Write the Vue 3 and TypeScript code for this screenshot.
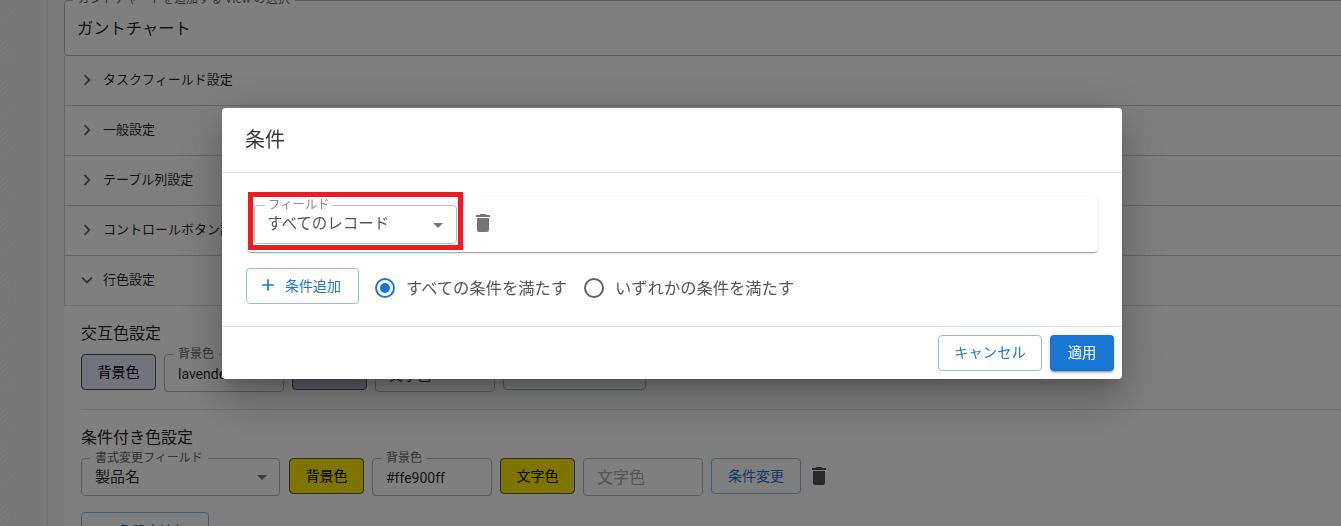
<script setup lang="ts">
interface Section { label: string }
const sections: Section[] = [
  { label: 'タスクフィールド設定' },
  { label: '一般設定' },
  { label: 'テーブル列設定' },
  { label: 'コントロールボタン設定' },
]
</script>

<template>
  <div class="page">
    <aside class="rail"><div class="hatch"></div></aside>
    <main class="main">
      <div class="content">
        <div class="outlined view-select">
          <span class="legend">ガントチャートを追加する View の選択</span>
          <span class="view-value">ガントチャート</span>
        </div>
        <div v-for="s in sections" :key="s.label" class="acc-head">
          <svg class="chev" viewBox="0 0 24 24" width="22" height="22"><path d="M8.6 16.6 13.2 12 8.6 7.4 10 6l6 6-6 6z" /></svg>
          <span class="acc-label">{{ s.label }}</span>
        </div>
        <div class="acc-head open">
          <svg class="chev" viewBox="0 0 24 24" width="22" height="22"><path d="M16.6 8.6 12 13.2 7.4 8.6 6 10l6 6 6-6z" /></svg>
          <span class="acc-label">行色設定</span>
        </div>
        <section class="acc-body">
          <h3 class="h-alt">交互色設定</h3>
          <div class="tools">
            <button class="color-btn lavender">背景色</button>
            <div class="outlined cfield"><span class="legend small">背景色</span>lavender</div>
            <button class="color-btn dark">文字色</button>
            <div class="outlined cfield"><span class="legend small">文字色</span>文字色</div>
            <button class="line-btn wide">条件変更</button>
          </div>
          <hr class="rule" />
          <h3 class="h-cond">条件付き色設定</h3>
          <div class="tools">
            <div class="outlined sel-field">
              <span class="legend small">書式変更フィールド</span>製品名
              <i class="caret"></i>
            </div>
            <button class="color-btn yellow">背景色</button>
            <div class="outlined cfield"><span class="legend small">背景色</span>#ffe900ff</div>
            <button class="color-btn yellow">文字色</button>
            <div class="outlined cfield placeholder">文字色</div>
            <button class="line-btn">条件変更</button>
            <svg class="trash" viewBox="0 0 24 24" width="24" height="24"><path d="M6 19c0 1.1.9 2 2 2h8c1.1 0 2-.9 2-2V7H6zM19 4h-3.5l-1-1h-5l-1 1H5v2h14z" /></svg>
          </div>
          <button class="line-btn add-rule"><span class="plus">+</span>色設定追加</button>
        </section>
      </div>
    </main>

    <div class="overlay">
      <div class="dialog">
        <header class="d-title"><span>条件</span></header>
        <div class="d-body">
          <div class="paper">
            <div class="highlight">
              <div class="d-field">
                <span class="d-legend">フィールド</span>
                <span>すべてのレコード</span>
                <i class="caret d-caret"></i>
              </div>
            </div>
            <svg class="d-trash" viewBox="0 0 24 24" width="24" height="24"><path d="M6 19c0 1.1.9 2 2 2h8c1.1 0 2-.9 2-2V7H6zM19 4h-3.5l-1-1h-5l-1 1H5v2h14z" /></svg>
          </div>
          <div class="d-actions">
            <button class="d-add">
              <svg viewBox="0 0 24 24" width="20" height="20"><path d="M19 13h-6v6h-2v-6H5v-2h6V5h2v6h6z" /></svg>
              <span>条件追加</span>
            </button>
            <label class="radio first"><i class="dot on"></i><span>すべての条件を満たす</span></label>
            <label class="radio"><i class="dot"></i><span>いずれかの条件を満たす</span></label>
          </div>
        </div>
        <footer class="d-foot">
          <button class="d-cancel">キャンセル</button>
          <button class="d-apply">適用</button>
        </footer>
      </div>
    </div>
  </div>
</template>

<style>
html, body { margin: 0; height: 100%; overflow: hidden; }
</style>

<style scoped>
.page {
  display: flex;
  height: 526px;
  overflow: hidden;
  background: #fff;
  color: rgba(0, 0, 0, 0.87);
  font-family: Roboto, "Noto Sans CJK JP", "Noto Sans", sans-serif;
  font-size: 14px;
}
.rail {
  flex: 0 0 47px;
  border-right: 1px solid #dcdcdc;
  background: #f0f0f0;
}
.hatch {
  width: 15px;
  height: 100%;
  background: repeating-linear-gradient(135deg, #f2f2f2 0 2px, #ececec 2px 4px);
}
.main { flex: 1 1 auto; padding-left: 16px; min-width: 0; margin-right: -20px; background: #f6f6f6; }
.content { background: #fff; height: 100%; }
.outlined {
  position: relative;
  box-sizing: border-box;
  border: 1px solid #bdbdbd;
  border-radius: 4px;
}
.legend {
  position: absolute;
  top: -9px;
  left: 8px;
  padding: 0 5px;
  background: #fff;
  font-size: 12px;
  line-height: 14px;
  color: #666;
  white-space: nowrap;
}
.legend.small { top: -8px; }
.view-select { height: 56px; display: flex; align-items: center; padding: 0 0 2px 12px; }
.view-value { font-size: 16.3px; }
.acc-head {
  display: flex;
  align-items: center;
  gap: 5px;
  height: 47px;
  padding: 0 0 2px 11px;
  border-bottom: 1px solid #cfcfcf;
  border-left: 1px solid #d4d4d4;
  font-size: 13px;
  box-sizing: content-box;
}
.acc-label { margin-bottom: 2px; }
.acc-head.open { border-bottom-color: #e0e0e0; }
.chev { fill: #666; flex: none; }
.acc-body { padding: 16px 17px; }
h3 { margin: 0; font-weight: 400; font-size: 16px; line-height: 24px; }
.h-alt { margin-bottom: 8px; }
.h-cond { margin-bottom: 8px; }
.tools { display: flex; align-items: flex-start; gap: 8px; }
.rule { margin: 17px 0 16px; border: 0; border-top: 1px solid #e0e0e0; }
button { font-family: inherit; cursor: pointer; }
.color-btn {
  box-sizing: border-box;
  width: 75px;
  height: 36px;
  border: 1px solid #555;
  border-radius: 4px;
  font-size: 14px;
  color: #000;
  padding: 0 0 3px;
  flex: none;
}
.lavender { background: #e6e6fa; }
.dark { background: #bcbcd8; }
.yellow { background: #ffe900; }
.cfield {
  flex: none;
  width: 120px;
  height: 38px;
  display: flex;
  align-items: center;
  padding: 2px 13px 0;
  font-size: 14px;
  white-space: nowrap;
}
.placeholder { color: #aaa; font-size: 16px; padding: 0 13px 2px; }
.line-btn {
  flex: none;
  box-sizing: border-box;
  height: 36px;
  padding: 0 16px 3px;
  background: #fff;
  border: 1px solid #90bde9;
  border-radius: 4px;
  color: #1976d2;
  font-size: 14px;
}
.wide { width: 143px; }
.sel-field {
  flex: none;
  width: 199px;
  height: 38px;
  display: flex;
  align-items: center;
  padding: 0 13px 4px;
  font-size: 15px;
  margin-right: 1px;
}
.caret {
  position: absolute;
  right: 12px;
  top: 50%;
  margin-top: -2px;
  border: 5px solid transparent;
  border-top-color: #757575;
  border-bottom: 0;
}
.d-caret { right: 13px; }
.trash { flex: none; margin: 6px 0 0 -2px; fill: #555; }
.add-rule { display: block; margin-top: 16px; width: 128px; padding: 0; }
.plus { margin-right: 8px; }

.overlay {
  position: fixed;
  inset: 0;
  background: rgba(0, 0, 0, 0.5);
  display: flex;
  justify-content: center;
  align-items: flex-start;
  padding-top: 108px;
}
.dialog {
  width: 900px;
  height: 271px;
  margin-left: 3px;
  background: #fff;
  border-radius: 4px;
  display: flex;
  flex-direction: column;
  box-shadow: 0 11px 15px -7px rgba(0,0,0,.2), 0 24px 38px 3px rgba(0,0,0,.14), 0 9px 46px 8px rgba(0,0,0,.12);
}
.d-title {
  padding: 0 0 1px 23px;
  box-sizing: content-box;
  height: 63px;
  display: flex;
  align-items: center;
  font-size: 20px;
  line-height: 1;
  border-bottom: 1px solid #e0e0e0;
  color: rgba(0,0,0,.8);
}
.d-body { flex: 1; padding: 24px 24px 0; }
.paper {
  display: flex;
  align-items: flex-start;
  height: 55px;
  margin-left: 1px;
  background: #fff;
  border-radius: 4px;
  box-shadow: 0 2px 1px -1px rgba(0,0,0,.2), 0 1px 1px 0 rgba(0,0,0,.14), 0 1px 3px 0 rgba(0,0,0,.12);
}
.highlight {
  box-sizing: border-box;
  width: 215px;
  height: 58px;
  margin: -5px 0 0 1px;
  border: 5px solid #ed1c24;
  padding: 8px 0 0 1px;
  flex: none;
}
.d-field {
  position: relative;
  box-sizing: border-box;
  width: 203px;
  height: 39px;
  border: 1px solid #bdbdbd;
  border-radius: 4px;
  padding: 0 12px 5px;
  display: flex;
  align-items: center;
  font-size: 15.5px;
  color: #555;
}
.d-legend {
  position: absolute;
  top: -8px;
  left: 10px;
  padding: 0 3px;
  background: #fff;
  font-size: 12.4px;
  line-height: 14px;
  color: #8a8a8a;
}
.d-trash { fill: #757575; margin: 14px 0 0 8px; }
.d-actions { display: flex; align-items: flex-start; margin-top: 16px; }
.d-add {
  box-sizing: border-box;
  width: 113px;
  height: 36px;
  display: flex;
  align-items: center;
  gap: 7px;
  padding: 0 0 2px 11px;
  background: #fff;
  border: 1px solid #90bde9;
  border-radius: 4px;
  color: #1976d2;
  font-size: 14px;
}
.d-add svg { fill: #1976d2; flex: none; }
.radio {
  display: flex;
  align-items: center;
  gap: 11px;
  height: 40px;
  margin-left: 17px;
  font-size: 16.3px;
  color: #555;
}
.radio span { margin-bottom: 2px; }
.radio.first { margin-left: 16px; }
.dot {
  box-sizing: border-box;
  position: relative;
  width: 20px;
  height: 20px;
  border: 2px solid #616161;
  border-radius: 50%;
}
.dot.on { border-color: #1976d2; }
.dot.on::after {
  content: "";
  position: absolute;
  inset: 3px;
  border-radius: 50%;
  background: #1976d2;
}
.d-foot {
  height: 53px;
  box-sizing: border-box;
  border-top: 1px solid #e0e0e0;
  padding: 8px;
  display: flex;
  justify-content: flex-end;
  align-items: flex-start;
  gap: 8px;
}
.d-cancel, .d-apply {
  box-sizing: border-box;
  height: 36px;
  border-radius: 4px;
  font-size: 14.3px;
  padding: 0 0 3px;
}
.d-cancel { width: 104px; background: #fff; border: 1px solid #90bde9; color: #1976d2; }
.d-apply {
  width: 64px;
  background: #1976d2;
  border: 0;
  color: #fff;
  box-shadow: 0 3px 1px -2px rgba(0,0,0,.2), 0 2px 2px 0 rgba(0,0,0,.14), 0 1px 5px 0 rgba(0,0,0,.12);
}
</style>
